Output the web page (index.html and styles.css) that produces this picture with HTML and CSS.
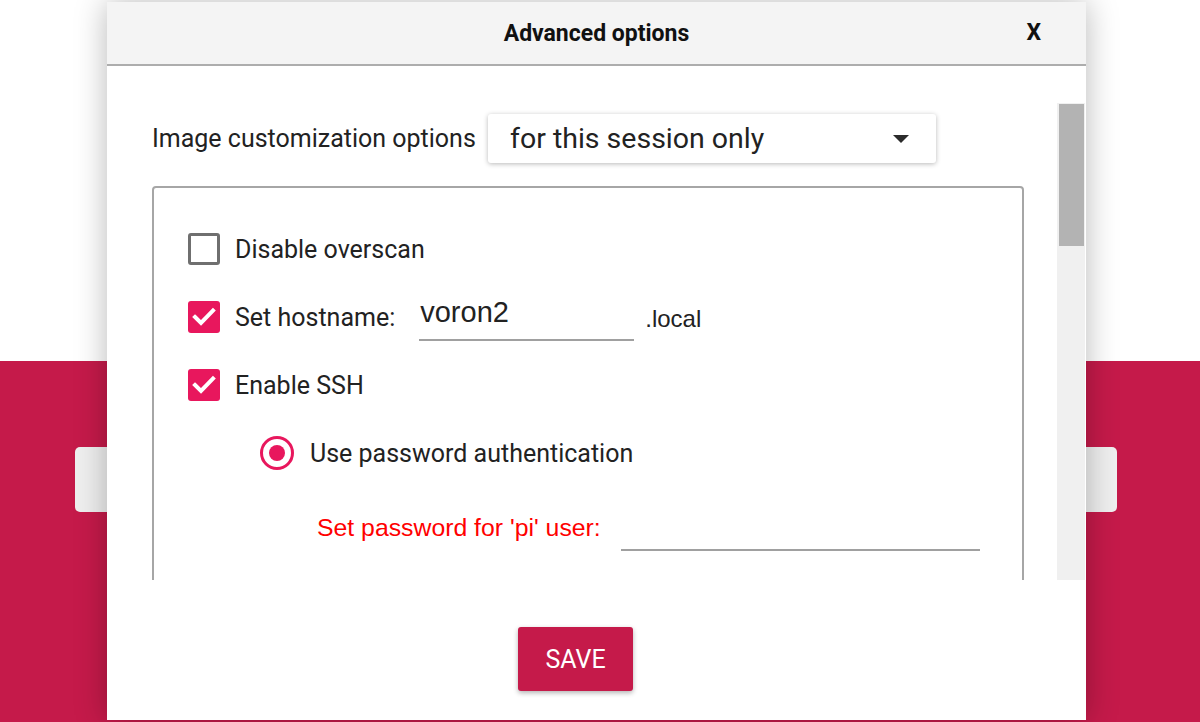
FILE: index.html
```html
<!DOCTYPE html>
<html>
<head>
<meta charset="utf-8">
<link rel="stylesheet" href="styles.css">
</head>
<body>
<div class="page">
  <div class="page-top"></div>
  <div class="page-bottom">
    <div class="behind-bar"></div>
  </div>
</div>

<div class="dialog">
  <div class="dlg-header">
    <div class="dlg-title">Advanced options</div>
    <div class="dlg-close">X</div>
  </div>
  <div class="dlg-spacer"></div>
  <div class="dlg-scroll">
    <div class="scroll-content">
      <div class="mode-row">
        <span class="mode-label">Image customization options</span>
        <div class="combo">
          <span class="combo-text">for this session only</span>
          <svg class="combo-arrow" width="16" height="8" viewBox="0 0 16 8"><path d="M0 0 L16 0 L8 8 Z" fill="#2b2b2b"/></svg>
        </div>
      </div>
      <div class="group">
        <div class="row">
          <span class="cb"></span>
          <span class="lbl">Disable overscan</span>
        </div>
        <div class="row">
          <span class="cb checked"><svg width="32" height="32" viewBox="0 0 32 32"><path d="M7 16 L13 22 L25 9.5" fill="none" stroke="#fff" stroke-width="4" stroke-linecap="square"/></svg></span>
          <span class="lbl">Set hostname:</span>
          <span class="field host"><span class="field-text">voron2</span></span>
          <span class="suffix">.local</span>
        </div>
        <div class="row">
          <span class="cb checked"><svg width="32" height="32" viewBox="0 0 32 32"><path d="M7 16 L13 22 L25 9.5" fill="none" stroke="#fff" stroke-width="4" stroke-linecap="square"/></svg></span>
          <span class="lbl">Enable SSH</span>
        </div>
        <div class="row radio-row">
          <span class="radio"><span class="radio-dot"></span></span>
          <span class="lbl">Use password authentication</span>
        </div>
        <div class="row pw-row">
          <span class="pw-label">Set password for 'pi' user:</span>
          <span class="field pw"></span>
        </div>
      </div>
    </div>
    <div class="scrollbar"><div class="thumb"></div></div>
  </div>
  <div class="dlg-footer">
    <button class="save">SAVE</button>
  </div>
</div>
</body>
</html>
```
FILE: styles.css
```css
html, body {
  margin: 0;
  padding: 0;
}
body {
  width: 1200px;
  height: 722px;
  overflow: hidden;
  font-family: Roboto, "Liberation Sans", sans-serif;
  color: #222;
  position: relative;
}
.page {
  display: flex;
  flex-direction: column;
  height: 722px;
}
.page-top {
  height: 361px;
  background: #fff;
}
.page-bottom {
  flex: 1;
  background: #c51a4a;
  padding: 86px 83px 0 75px;
}
.behind-bar {
  height: 65px;
  background: #efefef;
  border-radius: 5px;
}
.dialog {
  position: absolute;
  left: 107px;
  top: 2px;
  width: 979px;
  height: 718px;
  background: #fff;
  box-shadow: 0 0 30px rgba(0,0,0,0.28);
  display: flex;
  flex-direction: column;
}
.dlg-header {
  height: 62px;
  background: #f4f4f4;
  border-bottom: 2px solid #adadad;
  display: flex;
  align-items: center;
  position: relative;
}
.dlg-title {
  flex: 1;
  text-align: center;
  font-weight: 700;
  font-size: 23px;
  color: #111;
  padding-left: 0;
}
.dlg-close {
  position: absolute;
  right: 45px;
  top: 17px;
  font-weight: 700;
  font-size: 23px;
  color: #111;
}
.dlg-spacer {
  height: 37px;
}
.dlg-scroll {
  height: 477px;
  display: flex;
}
.scroll-content {
  flex: 1;
  overflow: hidden;
  padding-left: 45px;
}
.scrollbar {
  width: 28px;
  margin-right: 1px;
  background: #f0f0f0;
  display: flex;
  justify-content: center;
}
.thumb {
  width: 25px;
  height: 142px;
  margin-top: 1px;
  background: #b3b3b3;
}
.mode-row {
  display: flex;
  align-items: center;
  margin-top: 11px;
  height: 49px;
}
.mode-label {
  font-size: 25px;
  width: 336px;
  white-space: nowrap;
}
.combo {
  width: 448px;
  height: 49px;
  box-sizing: border-box;
  background: #fff;
  border-radius: 3px;
  box-shadow: 0 1px 5px rgba(0,0,0,0.28);
  display: flex;
  align-items: center;
  padding: 0 27px 0 22px;
}
.combo-text {
  flex: 1;
  font-size: 28.5px;
  color: #222;
}
.group {
  margin-top: 23px;
  width: 872px;
  height: 420px;
  box-sizing: border-box;
  border: 2px solid #a6a6a6;
  border-radius: 4px;
  padding: 27px 0 0 34px;
}
.row {
  display: flex;
  align-items: center;
  height: 68px;
}
.cb {
  width: 32px;
  height: 32px;
  box-sizing: border-box;
  border: 3px solid #6f6f6f;
  border-radius: 3px;
  margin-right: 15px;
  flex: none;
}
.cb.checked {
  border: none;
  background: #e8175d;
}
.cb svg {
  display: block;
}
.lbl {
  font-size: 25px;
  color: #222;
  white-space: nowrap;
}
.field {
  display: inline-flex;
  align-items: flex-end;
  border-bottom: 2px solid #a0a0a0;
  box-sizing: border-box;
}
.host {
  width: 215px;
  height: 46px;
  margin-left: 24px;
  margin-top: 2px;
  flex: none;
}
.field-text {
  font-family: "Liberation Sans", Arial, sans-serif;
  font-size: 29px;
  color: #222;
  padding-left: 1px;
  padding-bottom: 10px;
}
.suffix {
  font-family: "Liberation Sans", Arial, sans-serif;
  font-size: 24px;
  color: #222;
  margin-left: 11px;
  margin-top: 3px;
}
.radio-row {
  padding-left: 72px;
}
.radio {
  width: 34px;
  height: 34px;
  box-sizing: border-box;
  border: 3px solid #e8175d;
  border-radius: 50%;
  display: flex;
  align-items: center;
  justify-content: center;
  margin-right: 16px;
}
.radio-dot {
  width: 16px;
  height: 16px;
  border-radius: 50%;
  background: #e8175d;
}
.pw-row {
  height: 82px;
  padding-left: 129px;
  align-items: center;
}
.pw-label {
  font-family: "Liberation Sans", Arial, sans-serif;
  font-size: 24.8px;
  color: #f00;
  width: 304px;
  white-space: nowrap;
  flex: none;
}
.pw {
  width: 359px;
  height: 2px;
  margin-top: 44px;
}
.dlg-footer {
  flex: 1;
  display: flex;
  justify-content: center;
  align-items: flex-start;
  padding-top: 47px;
}
.save {
  width: 115px;
  height: 64px;
  margin-right: 42px;
  background: #c51a4a;
  color: #fff;
  border: none;
  border-radius: 3px;
  font-family: Roboto, "Liberation Sans", sans-serif;
  font-size: 25px;
  box-shadow: 0 2px 5px rgba(0,0,0,0.3);
}
```
